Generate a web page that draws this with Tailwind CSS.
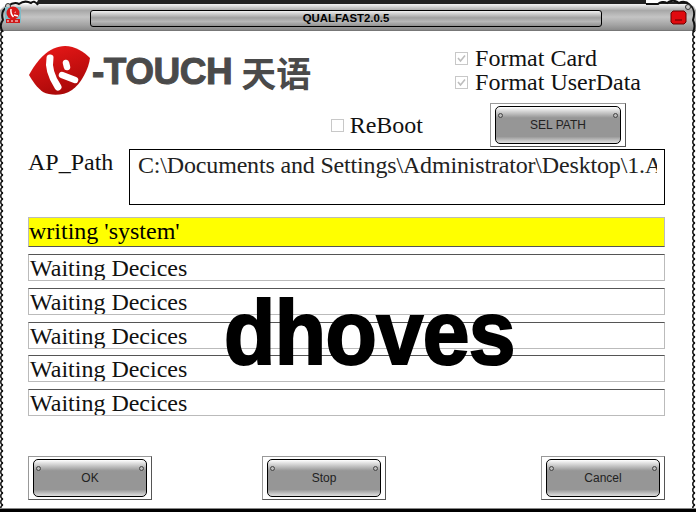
<!DOCTYPE html>
<html lang="en">
<head>
  <meta charset="UTF-8" />
  <title>QUALFAST2.0.5</title>
  <script src="https://cdn.jsdelivr.net/npm/@tailwindcss/browser@4"></script>
</head>
<body class="bg-white overflow-hidden">
<div class="relative w-[696px] h-[512px] flex flex-col bg-white font-['Liberation_Serif',serif] text-[24px] leading-[27px] text-[#111]">

  <!-- title bar -->
  <header class="relative h-[31px] shrink-0 flex items-center px-[90px] pt-[3px] border-t-[4px] border-b border-b-[#777] border-t-[#222] bg-[linear-gradient(#f4f4f4,#a8a8a8_25%,#c4c4c4_50%,#a4a4a4_80%,#8a8a8a)]">
    <div class="w-[512px] h-[17px] rounded-[3px] border border-black flex items-center justify-center font-['Liberation_Sans',sans-serif] text-[11.4px] font-bold leading-none text-black bg-[linear-gradient(#f0f0f0,#a0a0a0_45%,#b8b8b8_70%,#909090)]">QUALFAST2.0.5</div>
  </header>

  <!-- scalloped corners of the title bar -->
  <svg class="absolute left-0 top-0" width="40" height="32" viewBox="0 0 40 32">
    <path d="M0 0H38L36 4H12L4 6L0 10z" fill="#fff"/>
    <path d="M3 32C0 28 0 24 3 20C1 14 3 9 8 6C12 3 15 2 19 4C23 1 27 1 31 3C33 1 35 1 38 5" stroke="#111" stroke-width="2" fill="none"/>
    <circle cx="8" cy="6" r="2.5" fill="#ccc" stroke="#333"/>
    <rect x="5" y="7" width="16" height="16" fill="#7fbcc8"/>
    <circle cx="13" cy="13" r="6.5" fill="#d81818"/>
    <path d="M11 9c-.5 3 .5 6 2.500 8M15 12l.5 .5M14 15l4 1" stroke="#fff" stroke-width="1.500" fill="none"/>
    <rect x="6" y="19" width="14" height="4" fill="#d01818"/>
    <path d="M7 21h2M11 21h2M15 21h3" stroke="#fff" stroke-width="1"/>
  </svg>
  <svg class="absolute right-0 top-0" width="50" height="32" viewBox="0 0 50 32">
    <path d="M0 0H50V10L48 6L40 2H16L12 4H0z" fill="#fff"/>
    <path d="M0 4H12C14 2 18 1 21 3C25 0 29 0 33 3C37 1 41 2 44 5C48 8 49 14 47 20C49 24 49 28 47 32" stroke="#111" stroke-width="2" fill="none"/>
    <circle cx="42" cy="7" r="2.500" fill="#ccc" stroke="#333"/>
    <path d="M27 11h11l2 2v9l-2 2H27l-2-2v-9z" fill="#e00a0f" stroke="#6a0000"/>
    <path d="M29 20h7" stroke="#a00408" stroke-width="2"/>
  </svg>

  <div class="flex-1 min-h-0 flex">
    <!-- chain left -->
    <svg class="w-[4px] h-full shrink-0" aria-hidden="true">
      <defs>
        <pattern id="chain" width="4" height="6" patternUnits="userSpaceOnUse">
          <path d="M3 0C0 1 0 5 3 6" stroke="#111" stroke-width="1.500" fill="none"/>
        </pattern>
      </defs>
      <rect width="4" height="100%" fill="url(#chain)"/>
    </svg>

    <main class="flex-1 min-w-0 flex flex-col pl-[24px] pr-[27px]">
      <!-- logo + format options -->
      <section class="flex justify-between h-[71px] pr-[24px]">
        <div class="flex items-center mt-[15px] h-[50px] ml-[1px]">
          <svg width="62" height="50" viewBox="0 0 62 50" class="shrink-0">
            <defs>
              <linearGradient id="leaf" x1="0.2" y1="0" x2="0.6" y2="1">
                <stop offset="0" stop-color="#e81818"/>
                <stop offset="1" stop-color="#a80808"/>
              </linearGradient>
            </defs>
            <path d="M0 29C8 14 20 0 36 0C46 0 55 6 61 12C60 22 52 38 43 44C34 50 22 50 14 46C8 42 3 34 0 29z" fill="url(#leaf)"/>
            <path d="M21 12C19 22 23 32 29 41" stroke="#fff" stroke-width="7" stroke-linecap="round" fill="none"/>
            <path d="M37 17L38 21M33 29L46 34" stroke="#fff" stroke-width="6.500" stroke-linecap="round" fill="none"/>
          </svg>
          <span class="ml-[1px] font-['Liberation_Sans',sans-serif] font-bold text-[37px] leading-none tracking-[-0.5px] text-[#4a4a4a] [-webkit-text-stroke:1px_#4a4a4a]">-TOUCH</span>
          <span class="ml-[9px] font-['Noto_Sans_CJK_SC',sans-serif] font-bold text-[35px] leading-none text-[#4a4a4a]">天语</span>
        </div>
        <div class="flex flex-col pt-[15px] text-[24px] leading-[24px]">
          <label class="flex items-center gap-[7px]">
            <span class="w-[13px] h-[13px] border border-[#c8c8c8] flex items-center justify-center">
              <svg width="9" height="9" viewBox="0 0 9 9"><path d="M1 4l2.500 3L8 1.500" stroke="#bdbdbd" stroke-width="1.600" fill="none"/></svg>
            </span>Format Card</label>
          <label class="flex items-center gap-[7px]">
            <span class="w-[13px] h-[13px] border border-[#c8c8c8] flex items-center justify-center">
              <svg width="9" height="9" viewBox="0 0 9 9"><path d="M1 4l2.500 3L8 1.500" stroke="#bdbdbd" stroke-width="1.600" fill="none"/></svg>
            </span>Format UserData</label>
        </div>
      </section>

      <!-- reboot + sel path -->
      <section class="flex items-center justify-end h-[46px] pr-[39px]">
        <label class="flex items-center gap-[6px] mr-[67px]">
          <span class="w-[13px] h-[13px] border border-[#c8c8c8]"></span>ReBoot</label>
        <button class="relative w-[136px] h-[44px] px-[4px] py-[2px] border border-[#999] border-r-[#555] border-b-[#555]">
          <span class="relative flex h-full pt-px items-center justify-center border border-black rounded-[5px] font-['Liberation_Sans',sans-serif] text-[12px] text-[#222] bg-[linear-gradient(#fff,#969696_30%,#969696_82%,#e0e0e0)]">SEL PATH
            <i class="absolute left-[2px] top-[6px] w-[5px] h-[5px] rounded-full bg-[#bbb] border border-[#444]"></i>
            <i class="absolute right-[2px] top-[6px] w-[5px] h-[5px] rounded-full bg-[#bbb] border border-[#444]"></i>
          </span>
        </button>
      </section>

      <!-- path -->
      <section class="flex mt-[1px] h-[56px]">
        <span class="w-[101px]">AP_Path</span>
        <div class="flex-1 min-w-0 border border-black pl-[8px] pr-[7px] pt-[2px]">
          <div class="whitespace-nowrap overflow-hidden tracking-[-0.17px] text-[#222]">C:\Documents and Settings\Administrator\Desktop\1.A</div>
        </div>
      </section>

      <!-- status rows -->
      <section class="flex flex-col mt-[12px]">
        <div class="h-[30px] bg-[#ffff00] border border-[#bbb] border-b-[#555] leading-[26px] text-black">writing 'system'</div>
        <div class="flex flex-col gap-[6.8px] mt-[7px]">
          <div class="h-[27px] border border-[#bbb] border-t-[#555] pl-[1px] leading-[27px] overflow-hidden">Waiting Decices</div>
          <div class="h-[27px] border border-[#bbb] border-t-[#555] pl-[1px] leading-[27px] overflow-hidden">Waiting Decices</div>
          <div class="h-[27px] border border-[#bbb] border-t-[#555] pl-[1px] leading-[27px] overflow-hidden">Waiting Decices</div>
          <div class="h-[27px] border border-[#bbb] border-t-[#555] pl-[1px] leading-[27px] overflow-hidden">Waiting Decices</div>
          <div class="h-[27px] border border-[#bbb] border-t-[#555] pl-[1px] leading-[27px] overflow-hidden">Waiting Decices</div>
        </div>
      </section>

      <!-- actions -->
      <section class="flex mt-[40px]">
        <button class="relative w-[124px] h-[44px] px-[4px] py-[2px] border border-[#999] border-r-[#555] border-b-[#555]">
          <span class="relative flex h-full pt-px items-center justify-center border border-black rounded-[5px] font-['Liberation_Sans',sans-serif] text-[12px] text-[#222] bg-[linear-gradient(#fff,#969696_30%,#969696_82%,#e0e0e0)]">OK
            <i class="absolute left-[2px] top-[6px] w-[5px] h-[5px] rounded-full bg-[#bbb] border border-[#444]"></i>
            <i class="absolute right-[2px] top-[6px] w-[5px] h-[5px] rounded-full bg-[#bbb] border border-[#444]"></i>
          </span>
        </button>
        <button class="relative ml-[110px] w-[124px] h-[44px] px-[4px] py-[2px] border border-[#999] border-r-[#555] border-b-[#555]">
          <span class="relative flex h-full pt-px items-center justify-center border border-black rounded-[5px] font-['Liberation_Sans',sans-serif] text-[12px] text-[#222] bg-[linear-gradient(#fff,#969696_30%,#969696_82%,#e0e0e0)]">Stop
            <i class="absolute left-[2px] top-[6px] w-[5px] h-[5px] rounded-full bg-[#bbb] border border-[#444]"></i>
            <i class="absolute right-[2px] top-[6px] w-[5px] h-[5px] rounded-full bg-[#bbb] border border-[#444]"></i>
          </span>
        </button>
        <button class="relative ml-auto w-[124px] h-[44px] px-[4px] py-[2px] border border-[#999] border-r-[#555] border-b-[#555]">
          <span class="relative flex h-full pt-px items-center justify-center border border-black rounded-[5px] font-['Liberation_Sans',sans-serif] text-[12px] text-[#222] bg-[linear-gradient(#fff,#969696_30%,#969696_82%,#e0e0e0)]">Cancel
            <i class="absolute left-[2px] top-[6px] w-[5px] h-[5px] rounded-full bg-[#bbb] border border-[#444]"></i>
            <i class="absolute right-[2px] top-[6px] w-[5px] h-[5px] rounded-full bg-[#bbb] border border-[#444]"></i>
          </span>
        </button>
      </section>
    </main>

    <!-- chain right -->
    <svg class="w-[4px] h-full shrink-0" aria-hidden="true">
      <rect width="4" height="100%" fill="url(#chain)"/>
    </svg>
  </div>
  <div class="h-[4px] shrink-0 bg-black border-t border-[#888]"></div>

  <!-- watermark -->
  <div class="absolute left-[224px] top-[287px] origin-top-left scale-y-[1.08] font-['Liberation_Sans',sans-serif] font-bold text-[84px] leading-[84px] tracking-[-0.500px] text-black [-webkit-text-stroke:2px_black]">dhoves</div>
</div>
</body>
</html>
